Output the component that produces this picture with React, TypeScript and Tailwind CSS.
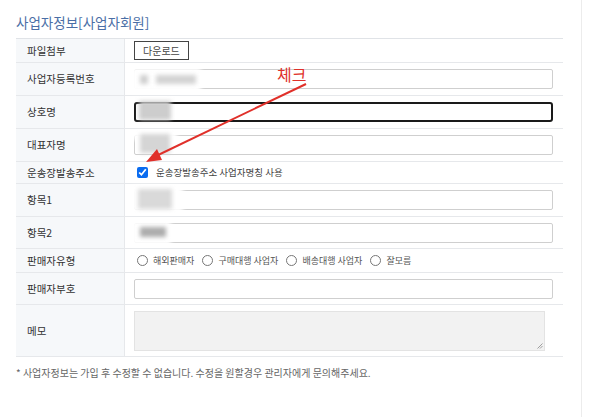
import React from "react"

const font = { fontFamily: '"Noto Sans CJK KR", "Noto Sans", sans-serif' }

function Row({ label, h, children }: { label: string; h: string; children: React.ReactNode }) {
  return (
    <div className={`flex border-b border-[#e6e8eb] ${h}`}>
      <div className="w-[109px] shrink-0 bg-[#f6f8fa] border-r border-[#e6e8eb] flex items-center pl-[11px] text-[10.5px] text-[#333]">
        {label}
      </div>
      <div className="flex-1 flex items-center pl-[9px] pr-[10px] relative">{children}</div>
    </div>
  )
}

function TextBox({ focused = false }: { focused?: boolean }) {
  return (
    <div
      className={
        focused
          ? "w-full h-[20px] rounded-[3px] border-2 border-[#1a1a1a] bg-white"
          : "w-full h-[20px] rounded-[2px] border border-[#cfcfcf] bg-white"
      }
    />
  )
}

// blurred placeholder blob on top of an input
function Smudge({ className }: { className: string }) {
  return <div className={`absolute blur-[2px] ${className}`} />
}

export default function App() {
  return (
    <div className="w-[600px] h-[417px] bg-white flex overflow-hidden" style={font}>
      <div className="w-[582px] h-full border-r border-[#ececec] pl-[16px] pr-[18px]">
        <h2 className="text-[13.5px] text-[#4a6ea6] mt-[12px] mb-[6px] leading-[20px]">사업자정보[사업자회원]</h2>

        <div className="border-t border-[#e0e3e7] relative">
          <Row label="파일첨부" h="h-[24px]">
            <button className="h-[19px] px-[8px] border border-[#444] bg-white text-[10px] text-[#444] leading-none">
              다운로드
            </button>
          </Row>
          <Row label="사업자등록번호" h="h-[33px]">
            <TextBox />
            <Smudge className="left-[6px] top-[5px] w-[70px] h-[24px] bg-white" />
            <Smudge className="left-[15px] top-[12px] w-[8px] h-[9px] bg-[#cfcfcf]" />
            <Smudge className="left-[31px] top-[12px] w-[40px] h-[9px] bg-[#d3d3d3]" />
          </Row>
          <Row label="상호명" h="h-[33px]">
            <TextBox focused />
            <Smudge className="left-[14px] top-[5px] w-[32px] h-[19px] bg-[#cdcdcd]" />
          </Row>
          <Row label="대표자명" h="h-[33px]">
            <TextBox />
            <Smudge className="left-[8px] top-[3px] w-[44px] h-[8px] bg-white" />
            <Smudge className="left-[15px] top-[5px] w-[30px] h-[19px] bg-[#d5d5d5]" />
          </Row>
          <Row label="운송장발송주소" h="h-[22px]">
            <label className="flex items-center gap-[8px] text-[9.5px] text-[#444]">
              <input type="checkbox" defaultChecked className="w-[11px] h-[11px] m-0 ml-[3px] accent-[#0a6cf0]" />
              운송장발송주소 사업자명칭 사용
            </label>
          </Row>
          <Row label="항목1" h="h-[33px]">
            <TextBox />
            <Smudge className="left-[6px] top-[2px] w-[52px] h-[26px] bg-white" />
            <Smudge className="left-[13px] top-[5px] w-[34px] h-[20px] bg-[#d9d9d9]" />
          </Row>
          <Row label="항목2" h="h-[32px]">
            <TextBox />
            <Smudge className="left-[6px] top-[4px] w-[40px] h-[24px] bg-white" />
            <Smudge className="left-[15px] top-[10px] w-[26px] h-[10px] bg-[#adadad]" />
          </Row>
          <Row label="판매자유형" h="h-[24px]">
            <div className="flex items-center text-[9px] text-[#555]">
              {["해외판매자", "구매대행 사업자", "배송대행 사업자", "잘모름"].map((t) => (
                <label key={t} className="flex items-center gap-[5px] mr-[5px]">
                  <input type="radio" name="seller" className="w-[11px] h-[11px] m-0 ml-[3px]" />
                  {t}
                </label>
              ))}
            </div>
          </Row>
          <Row label="판매자부호" h="h-[32px]">
            <TextBox />
          </Row>
          <Row label="메모" h="h-[52px]">
            <div className="relative w-[411px] h-[40px] border border-[#e3e3e3] bg-[#f2f2f2]">
              <svg className="absolute right-[1px] bottom-[1px]" width="7" height="7" viewBox="0 0 7 7">
                <path d="M6.5 1.5 L1.5 6.5 M6.5 4 L4 6.5" stroke="#888" strokeWidth="0.8" />
              </svg>
            </div>
          </Row>

          {/* red annotation overlay */}
          <div className="absolute left-[261px] top-[27px] text-[16px] text-[#e0302a] leading-none">체크</div>
          <svg className="absolute left-0 top-0 pointer-events-none" width="560" height="330">
            <line x1="290" y1="45" x2="138" y2="118" stroke="#e0302a" strokeWidth="2" />
            <polygon points="130,123 141,110 146,121" fill="#e0302a" />
          </svg>
        </div>

        <p className="mt-[8px] text-[10px] text-[#666]">
          * 사업자정보는 가입 후 수정할 수 없습니다. 수정을 원할경우 관리자에게 문의해주세요.
        </p>
      </div>
    </div>
  )
}
